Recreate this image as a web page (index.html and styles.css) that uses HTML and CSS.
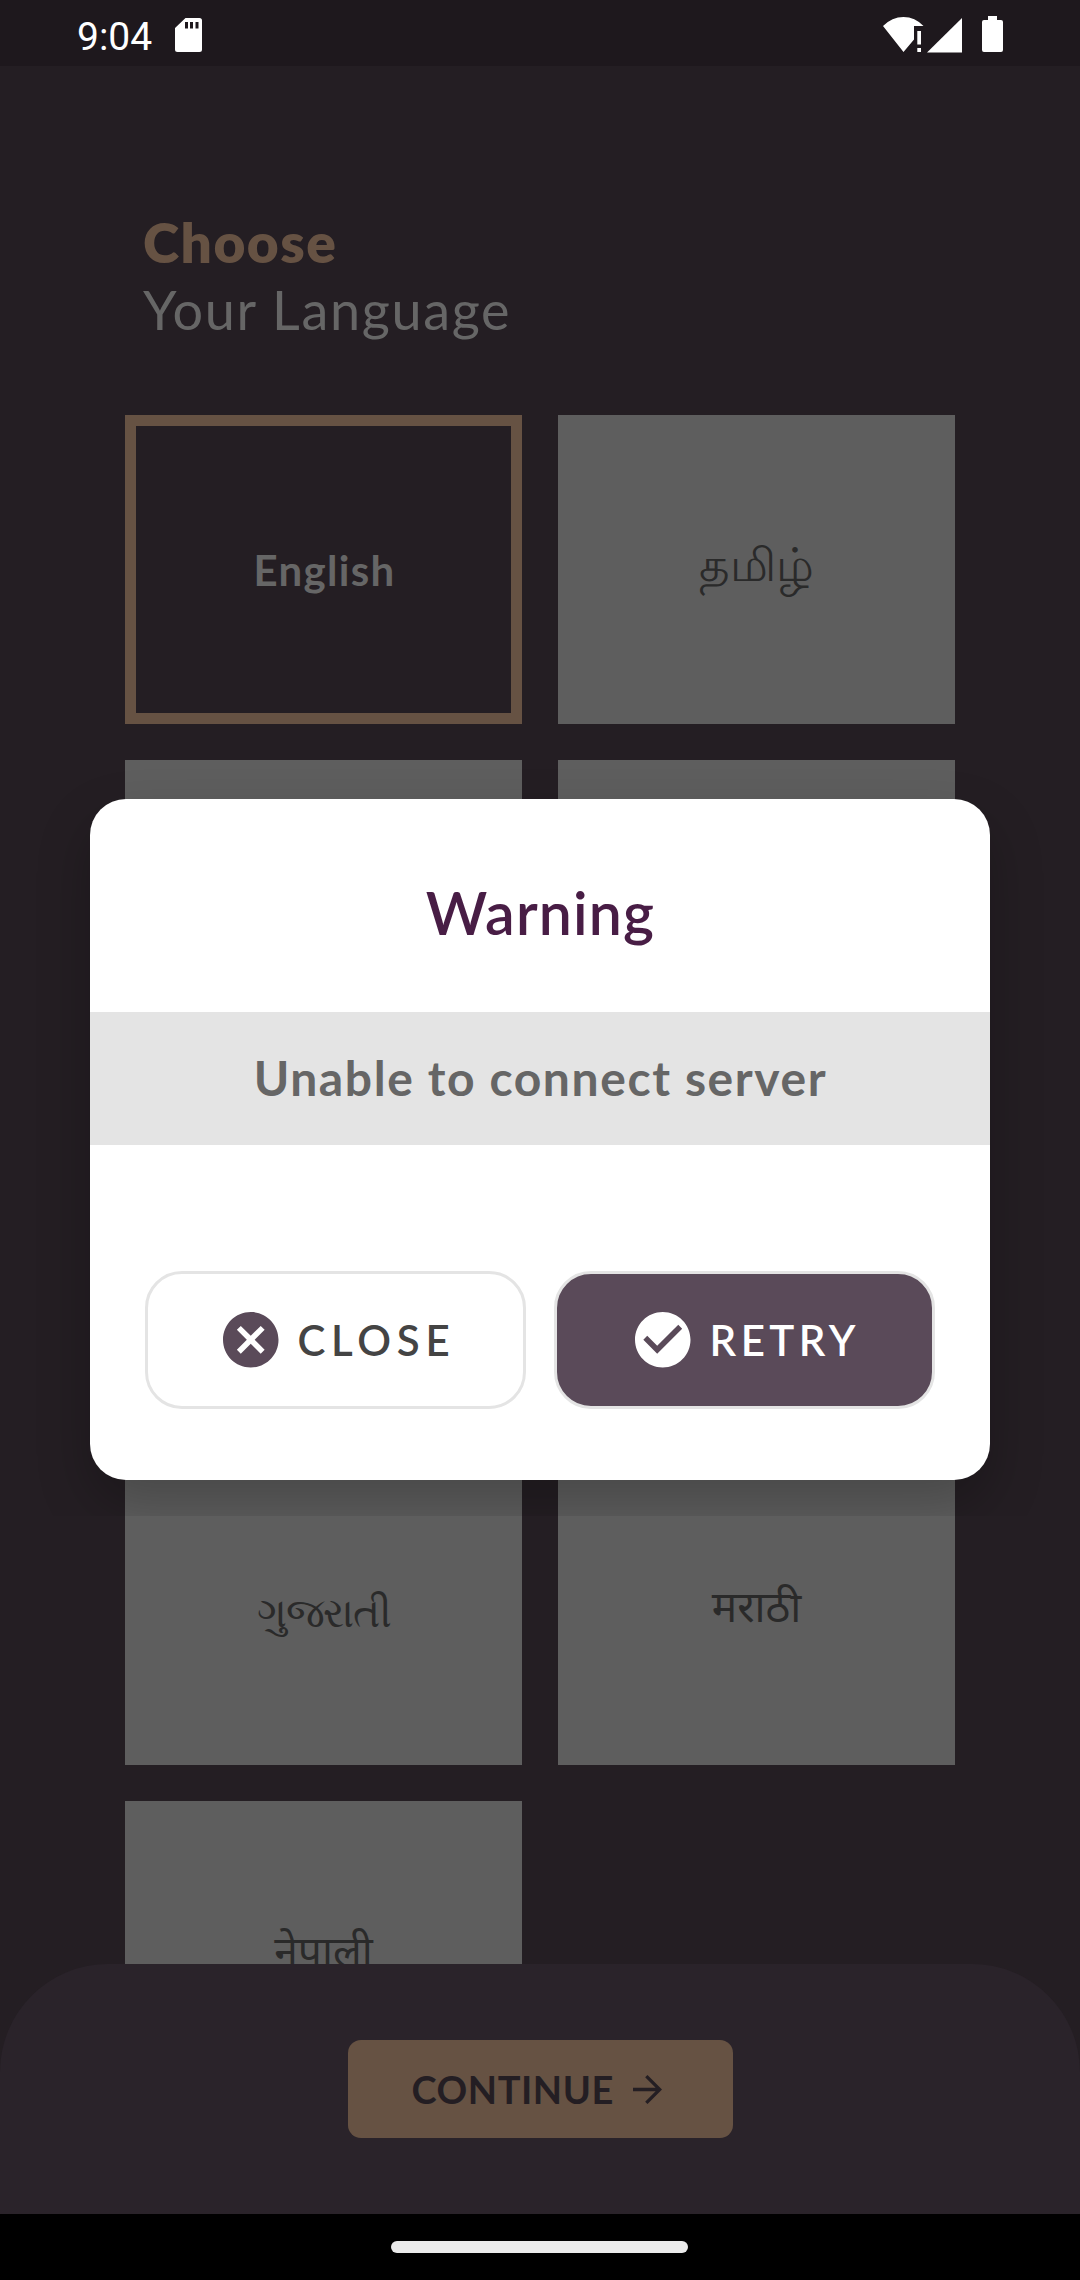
FILE: index.html
```html
<!DOCTYPE html>
<html lang="en">
<head>
<meta charset="utf-8">
<title>Choose Your Language</title>
<link rel="stylesheet" href="styles.css">
</head>
<body>
<div class="screen">
  <header class="status">
    <span class="clock">9:04</span>
    <svg class="sd" width="27" height="34" viewBox="0 0 27 34"><path fill="#fff" fill-rule="evenodd" d="M10.500 0H24.500Q27 0 27 2.500V31.500Q27 34 24.500 34H2.500Q0 34 0 31.500V10ZM10 4V10.500H13V4ZM15 4V10.500H18V4ZM20.500 4V10.500H23.500V4Z"/></svg>
    <svg class="wifi" width="41" height="36" viewBox="0 0 41 36"><path fill="#fff" d="M0 9Q9 0 20.500 0T40.500 9H31V22.500L20.500 35ZM34.300 14H38V27.500H34.300ZM34.300 31H38V35H34.300Z"/></svg>
    <svg class="signal" width="35" height="35" viewBox="0 0 35 35"><path fill="#fff" d="M35 0V34.500H0Z"/></svg>
    <svg class="battery" width="21" height="36" viewBox="0 0 21 36"><path fill="#fff" d="M6 0H15V4H19Q21 4 21 6V34Q21 36 19 36H2Q0 36 0 34V6Q0 4 2 4H6Z"/></svg>
  </header>

  <main class="page">
    <h1 class="heading"><span class="choose">Choose</span><span class="your">Your Language</span></h1>
    <div class="languages">
      <div class="card selected">English</div>
      <div class="card tamil" lang="ta">தமிழ்</div>
      <div class="card"></div>
      <div class="card"></div>
      <div class="card"></div>
      <div class="card"></div>
      <div class="card gujarati" lang="gu">ગુજરાતી</div>
      <div class="card" lang="mr">मराठी</div>
      <div class="card" lang="ne">नेपाली</div>
    </div>
  </main>

  <footer class="footer">
    <button class="continue">CONTINUE
      <svg width="29" height="29" viewBox="4 4 16 16"><path fill="#241e23" d="M12 4l-1.300 1.300 5.800 5.800H4v1.800h12.500l-5.800 5.800L12 20l8-8z"/></svg>
    </button>
  </footer>
  <nav class="gesture"><span class="pill"></span></nav>

  <div class="overlay">
    <section class="dialog">
      <h2 class="title">Warning</h2>
      <p class="message">Unable to connect server</p>
      <div class="actions">
        <button class="action">
          <svg width="55.500" height="55.500" viewBox="2 2 20 20"><path fill="#5a4a59" d="M12 2C6.470 2 2 6.470 2 12s4.470 10 10 10 10-4.470 10-10S17.530 2 12 2zm5 13.590L15.590 17 12 13.410 8.410 17 7 15.590 10.590 12 7 8.410 8.410 7 12 10.590 15.590 7 17 8.410 13.410 12 17 15.590z"/></svg>
          <span>CLOSE</span>
        </button>
        <button class="action retry">
          <svg width="55.500" height="55.500" viewBox="2 2 20 20"><path fill="#fff" d="M12 2C6.480 2 2 6.480 2 12s4.480 10 10 10 10-4.480 10-10S17.520 2 12 2zm-2 15l-5-5 1.410-1.410L10 14.170l7.590-7.590L19 8l-9 9z"/></svg>
          <span>RETRY</span>
        </button>
      </div>
    </section>
  </div>
</div>
</body>
</html>
```
FILE: styles.css
```css
* { box-sizing: border-box; }

body {
  margin: 0;
  background: #241e23;
  font-family: Lato, "Noto Sans", sans-serif;
}

h1, h2, p { margin: 0; }

button {
  border: 0;
  font-family: inherit;
}

.screen {
  position: relative;
  display: flex;
  flex-direction: column;
  width: 1080px;
  height: 2280px;
  overflow: hidden;
  background: #241e23;
}

/* Status bar */
.status {
  display: flex;
  align-items: flex-start;
  flex: none;
  height: 66px;
  padding: 16px 77px 0;
  background: #1e181d;
}
.clock {
  width: 98px;
  color: #fff;
  font: 400 39px/42px Roboto, sans-serif;
}
.sd { margin-top: 2px; }
.wifi { margin: 1px 3px 0 auto; }
.signal { margin: 2px 20px 0 0; }

/* Language list */
.page {
  flex: 1;
  min-height: 0;
  overflow: hidden;
  padding: 143px 125px 0;
}
.heading {
  display: flex;
  flex-direction: column;
  height: 206px;
  padding-left: 18px;
  font-size: 54px;
  line-height: 67px;
}
.choose {
  color: #665243;
  font-size: 55px;
  font-weight: 800;
  letter-spacing: 1.5px;
}
.your {
  color: #666;
  font-weight: 400;
  letter-spacing: 1.65px;
}
.languages {
  display: grid;
  grid-template-columns: 397px 397px;
  grid-template-rows: 309px 309px 315px 309px 309px;
  gap: 36px;
}
.card {
  padding-top: 120px;
  background: #5e5e5e;
  color: #2a2a2a;
  font: 400 42.5px/60px "Noto Sans", sans-serif;
  text-align: center;
}
.selected {
  padding: 114px 0 0 2px;
  border: 11px solid #665243;
  background: #241e23;
  color: #666;
  font: 700 42px/60px Lato, sans-serif;
  letter-spacing: 1.3px;
}
.tamil {
  padding-top: 118px;
  font-size: 46.5px;
}
.gujarati {
  padding-top: 125px;
  font-size: 41px;
  letter-spacing: -1.5px;
}

/* Bottom bar */
.footer {
  display: flex;
  justify-content: center;
  flex: none;
  height: 250px;
  padding-top: 76px;
  border-radius: 108px 108px 0 0;
  background: #2a232a;
}
.continue {
  display: flex;
  align-items: center;
  gap: 19px;
  width: 385px;
  height: 98px;
  padding: 0 0 0 64px;
  border-radius: 13px;
  background: #665243;
  color: #241e23;
  font-size: 38px;
  font-weight: 700;
  line-height: 96px;
  letter-spacing: .55px;
}
.gesture {
  display: flex;
  justify-content: center;
  flex: none;
  height: 66px;
  padding: 27px 1px 0 0;
  background: #000;
}
.pill {
  width: 297px;
  height: 12px;
  border-radius: 6px;
  background: #ebebeb;
}

/* Warning dialog; the overlay clips its shadow 36px under the dialog */
.overlay {
  position: absolute;
  inset: 0 0 auto;
  display: flex;
  align-items: flex-end;
  justify-content: center;
  height: 1516px;
  padding-bottom: 36px;
  overflow: hidden;
}
.dialog {
  width: 900px;
  height: 681px;
  border-radius: 36px;
  background: #fff;
  box-shadow: 0 24px 54px rgba(0, 0, 0, .24);
}
.title {
  height: 213px;
  padding: 79px 0 0 1px;
  color: #481d45;
  font-size: 59px;
  font-weight: 600;
  line-height: 70px;
  letter-spacing: 1.15px;
  text-align: center;
}
.message {
  height: 133px;
  padding-left: 1px;
  background: #e4e4e4;
  color: #666;
  font-size: 48px;
  font-weight: 700;
  line-height: 132px;
  letter-spacing: 1.6px;
  text-align: center;
}
.actions {
  display: flex;
  justify-content: space-between;
  padding: 126px 55px 0;
}
.action {
  display: flex;
  align-items: center;
  gap: 19px;
  width: 381px;
  height: 138px;
  padding: 0 0 0 75px;
  border: 3px solid #e4e4e4;
  border-radius: 37px;
  background: #fff;
  color: #444;
  font-size: 42px;
  font-weight: 600;
  line-height: 130px;
  letter-spacing: 5.7px;
}
.action span { margin-top: -1px; }
.retry {
  padding-left: 78px;
  background: #5a4a59;
  color: #fff;
  letter-spacing: 4.5px;
}
```
